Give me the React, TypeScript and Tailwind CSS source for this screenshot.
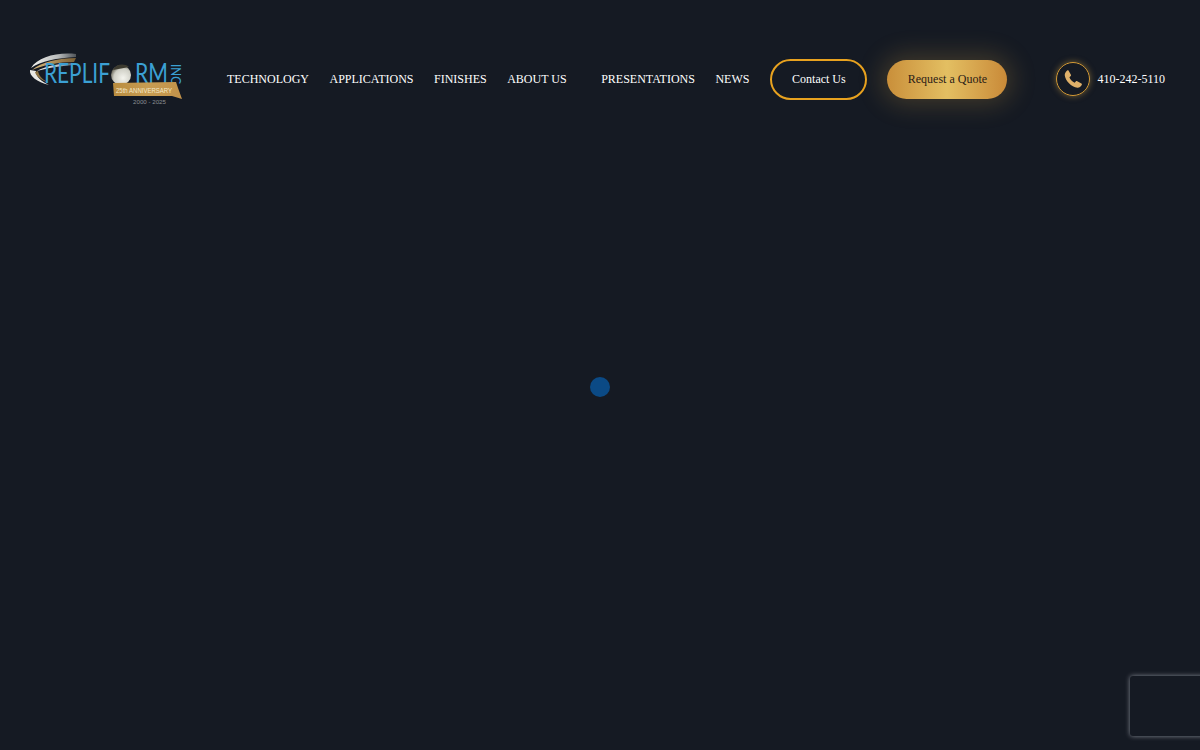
const NAV_ITEMS = [
  { label: "TECHNOLOGY", extra: false },
  { label: "APPLICATIONS", extra: false },
  { label: "FINISHES", extra: false },
  { label: "ABOUT US", extra: true },
  { label: "PRESENTATIONS", extra: false },
  { label: "NEWS", extra: false },
]

function Logo() {
  return (
    <svg width="154" height="56" viewBox="0 0 154 56" className="block shrink-0">
      <defs>
        <linearGradient id="silver" x1="0" y1="0" x2="1" y2="0">
          <stop offset="0" stopColor="#f2f2ee" />
          <stop offset="0.6" stopColor="#b9bcbc" />
          <stop offset="1" stopColor="#4f5459" />
        </linearGradient>
        <linearGradient id="gold" x1="0" y1="0" x2="1" y2="0">
          <stop offset="0" stopColor="#d8b878" />
          <stop offset="1" stopColor="#7a5f35" />
        </linearGradient>
        <linearGradient id="ribbon" x1="0" y1="0" x2="1" y2="0">
          <stop offset="0" stopColor="#b98c3f" />
          <stop offset="0.5" stopColor="#c79c52" />
          <stop offset="1" stopColor="#c2924a" />
        </linearGradient>
        <radialGradient id="ball" cx="0.6" cy="0.65" r="0.65">
          <stop offset="0" stopColor="#f4f4ee" />
          <stop offset="0.7" stopColor="#cfcfc6" />
          <stop offset="1" stopColor="#6a675a" />
        </radialGradient>
      </defs>
      {/* swoosh */}
      <path d="M47 3 C28 1 9 6 2 17 C12 10 28 7 47 6 Z" fill="url(#silver)" />
      <path d="M47 7 C30 7 12 11 3 19 C14 14 30 11 45 11 Z" fill="url(#gold)" />
      <path d="M45 12 C32 12 16 15 8 20 C18 17 32 15 44 14 Z" fill="url(#silver)" />
      <path d="M1 19 C0 25 8 31 20 34 C12 30 7 26 7 20 Z" fill="#e9e9e4" />
      <path d="M6 21 C7 25 12 29 18 31 C13 28 10 25 9 20 Z" fill="#8d7443" />
      <text x="15" y="32" fontFamily="Lato, 'Liberation Sans', sans-serif" fontSize="26" fontWeight="400" fill="#3ba0d4" textLength="66" lengthAdjust="spacingAndGlyphs">
        REPLIF
      </text>
      {/* ball stands in for the O */}
      <circle cx="92" cy="24" r="10" fill="url(#ball)" />
      <path d="M84 19 C87 13 95 12 100 16 C95 17 89 18 84 19 Z" fill="#3c3a2f" />
      <text x="106" y="32" fontFamily="Lato, 'Liberation Sans', sans-serif" fontSize="26" fontWeight="400" fill="#3ba0d4" textLength="33" lengthAdjust="spacingAndGlyphs">
        RM
      </text>
      <text x="0" y="0" transform="translate(142 13) rotate(90)" fontFamily="Lato, 'Liberation Sans', sans-serif" fontSize="13" fontWeight="400" fill="#3ba0d4" textLength="20" lengthAdjust="spacingAndGlyphs">
        INC
      </text>
      {/* ribbon */}
      <path d="M84 32 L147 31 L149 37 L153 48 L143 45 L85 45 Z" fill="url(#ribbon)" />
      <text x="87" y="42" fontFamily="'Liberation Sans', sans-serif" fontSize="7" fontWeight="400" fill="#f5e9c9" textLength="56" lengthAdjust="spacingAndGlyphs">
        25th ANNIVERSARY
      </text>
      <text x="104" y="53" fontFamily="'Liberation Sans', sans-serif" fontSize="6" fill="#8b8f92" textLength="33" lengthAdjust="spacingAndGlyphs">
        2000 - 2025
      </text>
    </svg>
  )
}

function PhoneIcon() {
  return (
    <svg viewBox="0 0 24 24" className="size-[20px]" fill="#dfb069">
      <path d="M6.6 1.800 9.500 6.900c.3.5.2 1.100-.2 1.500L7.700 10c.9 2.600 3.600 5.500 6.300 6.400l1.600-1.600c.4-.4 1-.5 1.500-.2l5 2.900c.6.300.8 1.100.4 1.700-1.200 2-3 3.500-5.200 3.300C10 21.800 2.800 14.300 2.100 7.600 1.900 5.300 3.300 3.200 5 1.700c.5-.4 1.300-.4 1.600.1Z" />
    </svg>
  )
}

export default function App() {
  return (
    <div className="relative h-[750px] overflow-hidden bg-[#151a23] font-['Liberation_Serif',serif] text-[12px] whitespace-nowrap text-white">
      {/* Header */}
      <header className="flex items-center pl-[29px] pt-[51px]">
        <Logo />
        <nav className="ml-[44px] flex items-center gap-[20.500px]">
          {NAV_ITEMS.map(({ label, extra }) => (
            <a key={label} className={extra ? "mr-[14px]" : ""}>
              {label}
            </a>
          ))}
        </nav>
        <a className="ml-[21px] flex h-[41px] w-[97px] items-center justify-center rounded-full border-2 border-[#e8a21f]">
          Contact Us
        </a>
        <a className="ml-[20px] flex h-[39px] w-[120px] items-center justify-center rounded-full bg-gradient-to-r from-[#c98f3a] via-[#e3bf62] to-[#c98a38] text-[#2a2016] shadow-[0_0_24px_6px_rgba(214,165,70,0.22)]">
          Request a Quote
        </a>
        <a className="ml-[49px] flex items-center gap-[7px]">
          <span className="flex size-[34px] items-center justify-center rounded-full border border-[#d49a35] shadow-[0_0_6px_rgba(214,165,70,0.5)]">
            <PhoneIcon />
          </span>
          410-242-5110
        </a>
      </header>

      {/* Preloader dot */}
      <div className="absolute left-[590px] top-[377px] size-[20px] rounded-full bg-[#0b4a85]" />

      {/* reCAPTCHA badge */}
      <div className="absolute left-[1130px] top-[676px] h-[60px] w-[256px] rounded-[3px] bg-[#151a23] shadow-[0_0_5px_rgba(160,165,175,0.8)]" />
    </div>
  )
}
